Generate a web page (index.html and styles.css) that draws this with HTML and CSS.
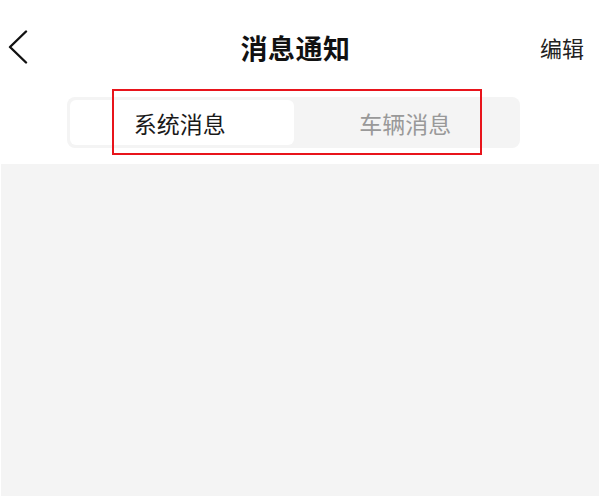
FILE: index.html
```html
<!DOCTYPE html>
<html lang="zh">
<head>
<meta charset="utf-8">
<title>消息通知</title>
<link rel="stylesheet" href="styles.css">
</head>
<body>
<div class="page">
  <header class="header">
    <div class="back">
      <svg width="22" height="34" viewBox="0 0 22 34" aria-hidden="true">
        <path d="M19 1.5 L3 17 L19 32.5" fill="none" stroke="#111" stroke-width="2.4" stroke-linecap="round" stroke-linejoin="round"/>
      </svg>
    </div>
    <h1 class="title">消息通知</h1>
    <div class="edit">编辑</div>
  </header>
  <div class="tabs-wrap">
    <div class="tabs">
      <div class="tab active">系统消息</div>
      <div class="tab">车辆消息</div>
      <div class="highlight"></div>
    </div>
  </div>
  <main class="content"></main>
</div>
</body>
</html>
```
FILE: styles.css
```css
* { box-sizing: border-box; }
html, body { margin: 0; padding: 0; background: #fff; }
body {
  font-family: "Noto Sans CJK SC", "Noto Sans", sans-serif;
  color: #1a1a1a;
}
.page {
  width: 600px;
  height: 496px;
  display: flex;
  flex-direction: column;
  overflow: hidden;
}
.header {
  height: 96px;
  display: grid;
  grid-template-columns: 1fr auto 1fr;
  align-items: center;
  padding: 0 16px 2px 7px;
}
.back { display: flex; align-items: center; }
.back svg { display: block; }
.title {
  margin: 0;
  font-size: 27px;
  font-weight: 700;
  color: #111;
  letter-spacing: 0.5px;
}
.edit {
  justify-self: end;
  font-size: 22px;
  color: #222;
}
.tabs-wrap {
  padding: 1px 0 16px;
}
.tabs {
  position: relative;
  width: 453px;
  height: 51px;
  margin: 0 0 0 67px;
  padding: 3px;
  background: #f4f4f4;
  border-radius: 8px;
  display: grid;
  grid-template-columns: 1fr 1fr;
}
.tab {
  display: flex;
  align-items: center;
  justify-content: center;
  font-size: 23px;
  color: #999;
  border-radius: 6px;
}
.tab.active {
  background: #fff;
  color: #1a1a1a;
  padding-right: 4px;
}
.highlight {
  position: absolute;
  left: 45px;
  top: -8px;
  width: 370px;
  height: 66px;
  border: 2px solid #e8141b;
}
.content {
  flex: 1;
  background: #f4f4f4;
  margin: 0 1px;
}
```
